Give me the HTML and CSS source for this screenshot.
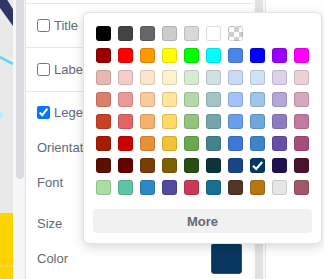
FILE: index.html
```html
<!DOCTYPE html>
<html lang="en">
  <head>
    <meta charset="UTF-8" />
    <meta name="viewport" content="width=device-width, initial-scale=1.0" />
    <title>Legend color</title>
    <link rel="stylesheet" href="styles.css">
  </head>
  <body>
    <div class="page">
      <div class="chart">
        <svg width="13" height="279" viewBox="0 0 13 279">
          <rect width="13" height="279" fill="#e9e9e9" />
          <polygon points="0,-2 6,-2 16,14 16,30 0,8" fill="#2f3564" />
          <line x1="0" y1="57" x2="13" y2="64" stroke="#5fd3f3" stroke-width="2.5" />
          <polygon points="0,110 4,115 0,119" fill="#aef0ff" />
          <rect y="213" width="13" height="66" fill="#ffd200" />
          <line x1="0" y1="266" x2="13" y2="266" stroke="#dcdcdc" stroke-width="1" stroke-dasharray="3 2" />
        </svg>
      </div>
      <div class="scroll">
        <div class="thumb"></div>
      </div>
      <div class="panel">
        <div class="panel-body">
          <div class="row row-top"></div>
          <div class="row row-main">
            <label class="check"><input type="checkbox" /> Title</label>
          </div>
          <div class="row row-main">
            <label class="check"><input type="checkbox" /> Label</label>
          </div>
          <div class="sub sub-legend">
            <label class="check"><input type="checkbox" checked /> Legend</label>
          </div>
          <div class="sub sub-orient">Orientation</div>
          <div class="sub sub-font">Font</div>
          <div class="sub sub-size">Size</div>
          <div class="sub sub-color">
            <span>Color</span>
            <span class="color-btn"></span>
          </div>
        </div>
        <div class="panel-scroll">
          <div class="panel-thumb"></div>
        </div>
      </div>
      <div class="side"></div>
    </div>

    <div class="picker">
      <div class="swatches" id="swatches"></div>
      <button class="more">More</button>
    </div>

    <script>
      const rows = [
        ['#000000', '#434343', '#666666', '#cccccc', '#d9d9d9', '#ffffff', 'none'],
        ['#980000', '#ff0000', '#ff9900', '#ffff00', '#00ff00', '#00ffff', '#4a86e8', '#0000ff', '#9900ff', '#ff00ff'],
        ['#e6b8af', '#f4cccc', '#fce5cd', '#fff2cc', '#d9ead3', '#d0e0e3', '#c9daf8', '#cfe2f3', '#d9d2e9', '#ead1dc'],
        ['#dd7e6b', '#ea9999', '#f9cb9c', '#ffe599', '#b6d7a8', '#a2c4c9', '#a4c2f4', '#9fc5e8', '#b4a7d6', '#d5a6bd'],
        ['#cc4125', '#e06666', '#f6b26b', '#ffd966', '#93c47d', '#76a5af', '#6d9eeb', '#6fa8dc', '#8e7cc3', '#c27ba0'],
        ['#a61c00', '#cc0000', '#e69138', '#f1c232', '#6aa84f', '#45818e', '#3c78d8', '#3d85c6', '#674ea7', '#a64d79'],
        ['#5b0f00', '#660000', '#783f04', '#7f6000', '#274e13', '#0c343d', '#1c4587', '#073763', '#20124d', '#4c1130'],
        ['#a9dfa3', '#61c4a6', '#2e88c5', '#524ba0', '#c83a58', '#177090', '#52362a', '#b87514', '#e6e6e6', '#a15669']
      ]
      const selected = '#073763'
      const box = document.getElementById('swatches')
      rows.forEach(function (row) {
        for (let i = 0; i < 10; i++) {
          const c = row[i]
          const el = document.createElement('span')
          if (c === undefined) {
            el.className = 'swatch empty'
          } else if (c === 'none') {
            el.className = 'swatch clear'
          } else {
            el.className = 'swatch'
            el.style.background = c
          }
          if (c === selected) {
            el.innerHTML = '<svg width="13" height="13" viewBox="0 0 13 13"><path d="M2 6.8 L5.2 10 L11.2 3" fill="none" stroke="#fff" stroke-width="2.2" /></svg>'
          }
          box.appendChild(el)
        }
      })
    </script>
  </body>
</html>
```

FILE: styles.css
```css
html,
body {
  margin: 0;
  width: 324px;
  height: 279px;
  overflow: hidden;
  background: #fff;
  font-family: "Liberation Sans", Arial, sans-serif;
}
.page {
  display: flex;
  height: 279px;
}
.chart {
  width: 13px;
  flex: none;
}
.chart svg {
  display: block;
}
.scroll {
  width: 13px;
  flex: none;
  background: #f6f7f9;
  border-right: 1px solid #dfe1e4;
  padding-left: 3px;
  box-sizing: border-box;
}
.thumb {
  width: 8px;
  height: 179px;
  border-radius: 0 0 4px 4px;
  background: #dadce0;
}
.panel {
  width: 239px;
  flex: none;
  display: flex;
  border-right: 1px solid #e3e3e3;
}
.panel-body {
  flex: 1;
  padding: 0 11px;
  color: #636973;
  font-size: 13px;
}
.row {
  border-bottom: 1px solid #e8e8e8;
  margin: 0 -11px;
  padding: 0 11px;
  display: flex;
  align-items: center;
}
.row-top {
  height: 3px;
}
.row-main {
  height: 43px;
}
.check {
  display: flex;
  align-items: center;
  gap: 4px;
  white-space: nowrap;
}
.check input {
  margin: 0;
  width: 13px;
  height: 13px;
}
.sub {
  display: flex;
  align-items: center;
  justify-content: space-between;
  white-space: nowrap;
}
.sub-legend {
  height: 41px;
}
.sub-orient {
  height: 28px;
}
.sub-font {
  height: 42px;
}
.sub-size {
  height: 40px;
}
.sub-color {
  height: 31px;
}
.color-btn {
  width: 31px;
  height: 31px;
  box-sizing: border-box;
  border-radius: 3px;
  background: #07375f;
  border: 1px solid #34506b;
}
.panel-scroll {
  width: 12px;
  flex: none;
  padding-left: 2px;
  box-sizing: border-box;
  background: #fafafa;
}
.panel-thumb {
  width: 8px;
  height: 279px;
  background: #e2e2e2;
}
.side {
  flex: 1;
  background: #fff;
}
.picker {
  position: absolute;
  left: 83px;
  top: 12px;
  width: 239px;
  box-sizing: border-box;
  padding: 13px 9px 10px;
  background: #fff;
  border: 1px solid #e4e4e4;
  border-radius: 6px;
  box-shadow: 0 3px 12px rgba(0, 0, 0, 0.16);
}
.swatches {
  display: grid;
  grid-template-columns: repeat(10, 15px);
  grid-auto-rows: 15px;
  gap: 7px;
  margin: 0 3px;
}
.swatch {
  box-sizing: border-box;
  border: 1px solid rgba(0, 0, 0, 0.13);
  border-radius: 3px;
  display: flex;
  align-items: center;
  justify-content: center;
}
.swatch.empty {
  visibility: hidden;
}
.swatch.clear {
  background: repeating-conic-gradient(#cfcfcf 0 25%, #fff 0 50%) 0 0 / 10px 10px;
}
.more {
  display: block;
  width: 100%;
  height: 24px;
  margin-top: 14px;
  border: none;
  border-radius: 4px;
  background: #f1f1f1;
  color: #636973;
  font-family: "Liberation Sans", Arial, sans-serif;
  font-size: 13px;
  font-weight: bold;
}
```
